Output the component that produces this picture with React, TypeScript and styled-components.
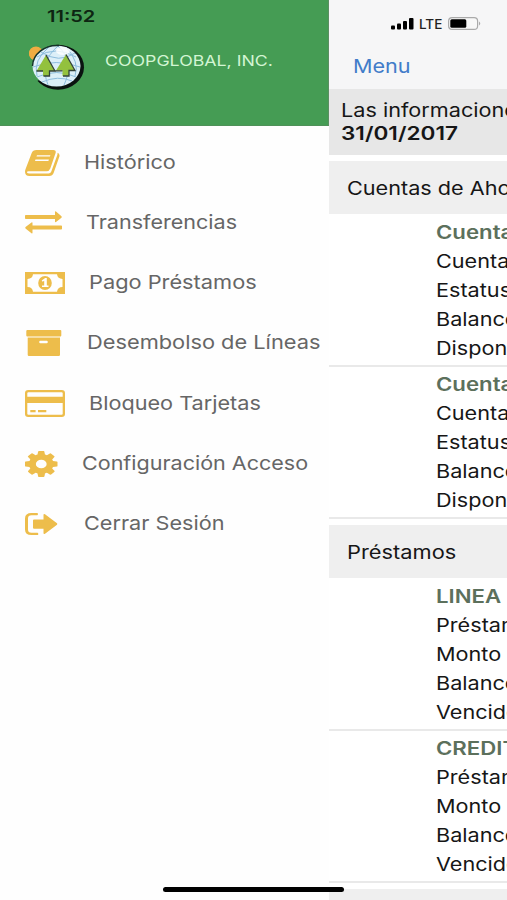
import React from "react";
import styled, { createGlobalStyle } from "styled-components";

const GlobalStyle = createGlobalStyle`
  * { box-sizing: border-box; }
  html, body { margin: 0; padding: 0; }
  body {
    width: 507px;
    height: 900px;
    overflow: hidden;
    background: #fff;
    font-family: Inter, "Liberation Sans", sans-serif;
  }
`;

const Screen = styled.div`
  position: relative;
  display: grid;
  grid-template-columns: 329px 178px;
  width: 507px;
  height: 900px;
  overflow: hidden;
`;

/* Wide-set label: glyphs are stretched horizontally from their left edge. */
const Label = styled.span<{ $stretch?: number }>`
  display: block;
  width: max-content;
  white-space: nowrap;
  transform: scaleX(${(p) => p.$stretch ?? 1.17});
  transform-origin: 0 50%;
`;

const Drawer = styled.aside`
  background: #fefefe;
  overflow: hidden;
`;

const Brand = styled.header`
  height: 126px;
  background: #459c54;
  border-right: 1px solid #5c8f63;
  border-bottom: 1px solid #4f9159;
`;

const Clock = styled.div`
  height: 32px;
  padding-left: 46.5px;
  font-size: 15.5px;
  font-weight: 600;
  line-height: 33px;
  color: #0d2512;
`;

const BrandRow = styled.div`
  display: flex;
  padding: 10px 0 0 27px;
`;

const BrandName = styled.div`
  padding-left: 18.5px;
  font-size: 14.7px;
  line-height: 38px;
  color: #d3f5d3;
`;

const Menu = styled.nav`
  padding-top: 6.5px;
`;

const MenuRow = styled.a`
  display: flex;
  align-items: center;
  height: 60.25px;
  padding-left: 25px;
  color: #666;
`;

const MenuIcon = styled.svg<{ $w: number; $h: number }>`
  flex: none;
  width: ${(p) => p.$w}px;
  height: ${(p) => p.$h}px;
  fill: #edbd4b;
`;

const MenuText = styled.div<{ $gap: number }>`
  padding-left: ${(p) => p.$gap}px;
  font-size: 19px;
  line-height: 26px;
`;

const Content = styled.main`
  background: #fff;
  overflow: hidden;
`;

const TopBar = styled.header`
  height: 89px;
  background: #f6f6f7;
`;

const StatusIcons = styled.div`
  display: flex;
  align-items: center;
  height: 47px;
  padding-left: 62px;
`;

const Carrier = styled.div`
  width: 25px;
  margin: 0 4px 0 5px;
  font-size: 13px;
  font-weight: 500;
  color: #222;
`;

const MenuButton = styled.div`
  padding: 2px 0 0 24px;
  font-size: 18.8px;
  line-height: 36px;
  color: #427cc9;
`;

const Notice = styled.section`
  height: 66px;
  padding: 10px 0 0 12px;
  background: #e7e7e7;
  font-size: 18.5px;
  line-height: 23px;
  color: #161616;
`;

const Strong = styled.div`
  font-weight: 600;
`;

const SectionTitle = styled.h2`
  height: 53px;
  margin: 6px 0 0;
  padding: 1px 0 0 18px;
  background: #efefef;
  font-size: 18.5px;
  font-weight: 400;
  line-height: 53px;
  color: #161616;
`;

const Account = styled.article`
  height: 152.5px;
  padding: 3.6px 0 0 107px;
  border-bottom: 2px solid #e9e9e9;
  font-size: 18.5px;
  line-height: 29.1px;
  color: #161616;
`;

const AccountName = styled.div`
  font-weight: 600;
  color: #5c705c;
`;

const HomeBar = styled.div`
  position: absolute;
  left: 163px;
  top: 887px;
  width: 181px;
  height: 5px;
  border-radius: 3px;
  background: #000;
`;

const Logo = () => (
  <svg width="59" height="50" viewBox="0 0 59 50">
    <circle cx="9" cy="11.5" r="7" fill="#f0ac42" />
    <ellipse cx="31" cy="25.200" rx="26" ry="22.5" fill="#0a1210" />
    <path d="M2 18 Q3 32 9 39.500 L17 36 L10 18Z" fill="#459c54" />
    <circle cx="8.500" cy="11.5" r="6.500" fill="#f0ac42" />
    <ellipse cx="29.5" cy="24" rx="24" ry="20.5" fill="#dceff8" />
    <g fill="none" stroke="#8dbddd" strokeWidth="1">
      <path d="M10 15 Q28 3 49 15 M6 25 Q29 16 53 25 M10 35 Q30 26 49 35 M15 40 Q31 33 45 39" />
      <path d="M31 4 Q12 20 21 43 M31 4 Q48 20 37 43 M22 5 Q6 18 10 34 M39 5 Q53 20 48 34 M14 10 Q32 22 48 11" />
    </g>
    <ellipse cx="36" cy="9" rx="7" ry="4" fill="#fff" opacity=".8" />
    <path d="M5.500 24 A24.500 21 0 0 1 32 3.500" fill="none" stroke="#15332a" strokeWidth="1.500" />
    <g fill="#93c13e">
      <path d="M19 13 L28 29 H22.500 V34 H16 V29 H9.500Z" />
      <path d="M39 12.500 L48 28.500 H42 V34 H35.500 V28.500 H29Z" />
    </g>
    <path
      d="M19 13 L28 29 H22.500 V34 H16.500 M9.500 29 H16 M39 12.500 L48 28.500 H42 V34 H36 M28 28.800 H35.500"
      fill="none"
      stroke="#33423a"
      strokeWidth="1.300"
    />
  </svg>
);

const BookIcon = () => (
  <MenuIcon $w={35} $h={26} viewBox="0 0 35 26">
    <path
      fillRule="evenodd"
      d="M11.500 0H28.500Q31.500 0 30.600 3L25.300 18.500Q24.300 21.200 21.500 21.200H3.500Q1.800 21.200 2 22.400Q2.300 23.500 4.500 23.500H23.500Q25.600 23.500 26.300 21.600L32.300 5Q32.600 4 32.500 2.800Q35.200 3.800 34.300 6.800L28.600 23Q27.500 26 24.300 26H4.500Q0 26 0 21.800Q0 20.500 .7 18.800L6.600 3.200Q7.800 0 11.500 0Z M12 5.200L11.500 6.600H24.900L25.400 5.200Z M10.500 9.600L10 11H23.400L23.900 9.600Z"
    />
  </MenuIcon>
);

const TransferIcon = () => (
  <MenuIcon $w={37} $h={23} viewBox="0 0 37 23">
    <path d="M.8 4H30V1Q30 0 31 .5L36.500 5.200Q37 6 36.500 6.700L31 11Q30 11.500 30 10.500V8H.8Q0 8 0 7.200V4.800Q0 4 .8 4Z" />
    <path d="M36.200 14.500H7.500V12Q7.500 11 6.500 11.500L.5 16Q0 16.700 .5 17.500L6.500 22.300Q7.500 22.800 7.500 21.800V18.500H36.200Q37 18.500 37 17.700V15.300Q37 14.500 36.200 14.500Z" />
  </MenuIcon>
);

const MoneyIcon = () => (
  <MenuIcon $w={40} $h={22} viewBox="0 0 40 22">
    <path
      fillRule="evenodd"
      d="M0 0H40V22H0Z M8 2.300Q7.500 6.800 2.500 7V15Q7.500 15.200 8 19.700H32Q32.500 15.200 37.500 15V7Q32.500 6.800 32 2.300Z"
    />
    <ellipse cx="20" cy="11" rx="6.800" ry="7" />
    <path d="M20.200 6H21.800V13.500H23.500V15H17V13.500H19.200V8.700L17.600 9.700L16.700 8.500Z" fill="#fff" />
  </MenuIcon>
);

const ArchiveIcon = () => (
  <MenuIcon $w={37} $h={26} viewBox="0 0 37 26">
    <rect x="1.300" width="35" height="6.500" rx="1" />
    <path
      fillRule="evenodd"
      d="M2.700 7.500H35V24.800Q35 26 33.800 26H3.900Q2.700 26 2.700 24.800Z M15.300 10.700Q14.200 10.700 14.200 12T15.300 13.300H21.700Q22.800 13.300 22.800 12T21.700 10.700Z"
    />
  </MenuIcon>
);

const CardIcon = () => (
  <MenuIcon $w={40} $h={27} viewBox="0 0 40 27">
    <path
      fillRule="evenodd"
      d="M3.200 0H36.800Q40 0 40 3V24Q40 27 36.800 27H3.200Q0 27 0 24V3Q0 0 3.200 0Z M3.400 2.300Q2.300 2.300 2.300 3.300V6.800H37.700V3.300Q37.700 2.300 36.600 2.300Z M2.300 13V23.700Q2.300 24.700 3.400 24.700H36.600Q37.700 24.700 37.700 23.700V13Z"
    />
    <path d="M5.300 20H10.600V22.300H5.300Z M13 20H21.300V22.300H13Z" />
  </MenuIcon>
);

const GearIcon = () => (
  <MenuIcon $w={32.5} $h={26} viewBox="128 128 1536 1536" preserveAspectRatio="none">
    <path d="M1152 896q0-106-75-181t-181-75-181 75-75 181 75 181 181 75 181-75 75-181zm512-109v222q0 12-8 23t-20 13l-185 28q-19 54-39 91 35 50 107 138 10 12 10 25t-9 23q-27 37-99 108t-94 71q-12 0-26-9l-138-108q-44 23-91 38-16 136-29 186-7 28-36 28h-222q-14 0-24.500-8.500t-11.500-21.500l-28-184q-49-16-90-37l-141 107q-10 9-25 9-14 0-25-11-126-114-165-168-7-10-7-23 0-12 8-23 15-21 51-66.500t54-70.500q-27-50-41-99l-183-27q-13-2-21-12.500t-8-23.500v-222q0-12 8-23t19-13l186-28q14-46 39-92-40-57-107-138-10-12-10-24 0-10 9-23 26-36 98.500-107.500t94.500-71.500q13 0 26 10l138 107q44-23 91-38 16-136 29-186 7-28 36-28h222q14 0 24.500 8.500t11.500 21.500l28 184q49 16 90 37l142-107q9-9 24-9 13 0 25 10 129 119 165 170 7 8 7 22 0 12-8 23-15 21-51 66.500t-54 70.500q26 50 41 98l183 28q13 2 21 12.500t8 23.500z" />
  </MenuIcon>
);

const SignOutIcon = () => (
  <MenuIcon $w={33} $h={22} viewBox="0 0 33 22">
    <path d="M12 0Q13 0 13 1T12.300 2.200H6.500Q3 2.200 3 5.500V16.500Q3 19.800 6.500 19.800H12.300Q13.300 19.800 13.300 21T12.300 22H6.500Q0 22 0 16.500V5.500Q0 0 6.500 0Z" />
    <path d="M9 6.500H18.500V2Q18.500 .3 20 1.300L32 10.300Q32.600 11 32 11.700L20 20.700Q18.500 21.700 18.500 20V15.700H9Q8 15.700 8 14.700V7.500Q8 6.500 9 6.500Z" />
  </MenuIcon>
);

const menuItems = [
  { label: "Histórico", Icon: BookIcon, gap: 24, stretch: 1.14 },
  { label: "Transferencias", Icon: TransferIcon, gap: 24, stretch: 1.135 },
  { label: "Pago Préstamos", Icon: MoneyIcon, gap: 24, stretch: 1.146 },
  { label: "Desembolso de Líneas", Icon: ArchiveIcon, gap: 24.5, stretch: 1.147 },
  { label: "Bloqueo Tarjetas", Icon: CardIcon, gap: 24, stretch: 1.14 },
  { label: "Configuración Acceso", Icon: GearIcon, gap: 24.5, stretch: 1.133 },
  { label: "Cerrar Sesión", Icon: SignOutIcon, gap: 26, stretch: 1.14 },
];

const savings = [
  { name: "Cuenta", lines: ["Cuenta", "Estatus", "Balance", "Disponible"] },
  { name: "Cuenta", lines: ["Cuenta", "Estatus", "Balance", "Disponible"] },
];

const loans = [
  { name: "LINEA", lines: ["Préstamo", "Monto", "Balance", "Vencido"] },
  { name: "CREDITO", lines: ["Préstamo", "Monto", "Balance", "Vencido"] },
];

const AccountList = ({ items }: { items: typeof savings }) => (
  <>
    {items.map((item, i) => (
      <Account key={i}>
        <AccountName>
          <Label $stretch={1.2}>{item.name}</Label>
        </AccountName>
        {item.lines.map((line) => (
          <Label key={line}>{line}</Label>
        ))}
      </Account>
    ))}
  </>
);

export default function App() {
  return (
    <>
      <GlobalStyle />
      <Screen>
        <Drawer>
          <Brand>
            <Clock>
              <Label $stretch={1.29}>11:52</Label>
            </Clock>
            <BrandRow>
              <Logo />
              <BrandName>
                <Label $stretch={1.207}>COOPGLOBAL, INC.</Label>
              </BrandName>
            </BrandRow>
          </Brand>
          <Menu>
            {menuItems.map(({ label, Icon, gap, stretch }) => (
              <MenuRow key={label}>
                <Icon />
                <MenuText $gap={gap}>
                  <Label $stretch={stretch}>{label}</Label>
                </MenuText>
              </MenuRow>
            ))}
          </Menu>
        </Drawer>
        <Content>
          <TopBar>
            <StatusIcons>
              <svg width="23" height="12" viewBox="0 0 23 12">
                <rect y="7.500" width="4" height="4" rx="1" />
                <rect x="6" y="5.500" width="4" height="6" rx="1" />
                <rect x="12" y="3" width="4" height="8.500" rx="1" />
                <rect x="18" y="0" width="4.500" height="11.500" rx="1" />
              </svg>
              <Carrier>
                <Label $stretch={1.04}>LTE</Label>
              </Carrier>
              <svg width="34" height="13" viewBox="0 0 34 13">
                <rect x=".6" y=".6" width="29" height="11.800" rx="3.500" fill="#f8f8f8" stroke="#aaa" strokeWidth="1.200" />
                <rect x="2.300" y="2.300" width="16" height="8.500" rx="1.500" />
                <path d="M31 4.500Q33.500 6.500 31 8.500Z" fill="#aaa" />
              </svg>
            </StatusIcons>
            <MenuButton>
              <Label $stretch={1.15}>Menu</Label>
            </MenuButton>
          </TopBar>
          <Notice>
            <Label>Las informaciones</Label>
            <Strong>
              <Label $stretch={1.22}>31/01/2017</Label>
            </Strong>
          </Notice>
          <SectionTitle>
            <Label>Cuentas de Ahorros</Label>
          </SectionTitle>
          <AccountList items={savings} />
          <SectionTitle>
            <Label $stretch={1.18}>Préstamos</Label>
          </SectionTitle>
          <AccountList items={loans} />
          <SectionTitle />
        </Content>
        <HomeBar />
      </Screen>
    </>
  );
}
